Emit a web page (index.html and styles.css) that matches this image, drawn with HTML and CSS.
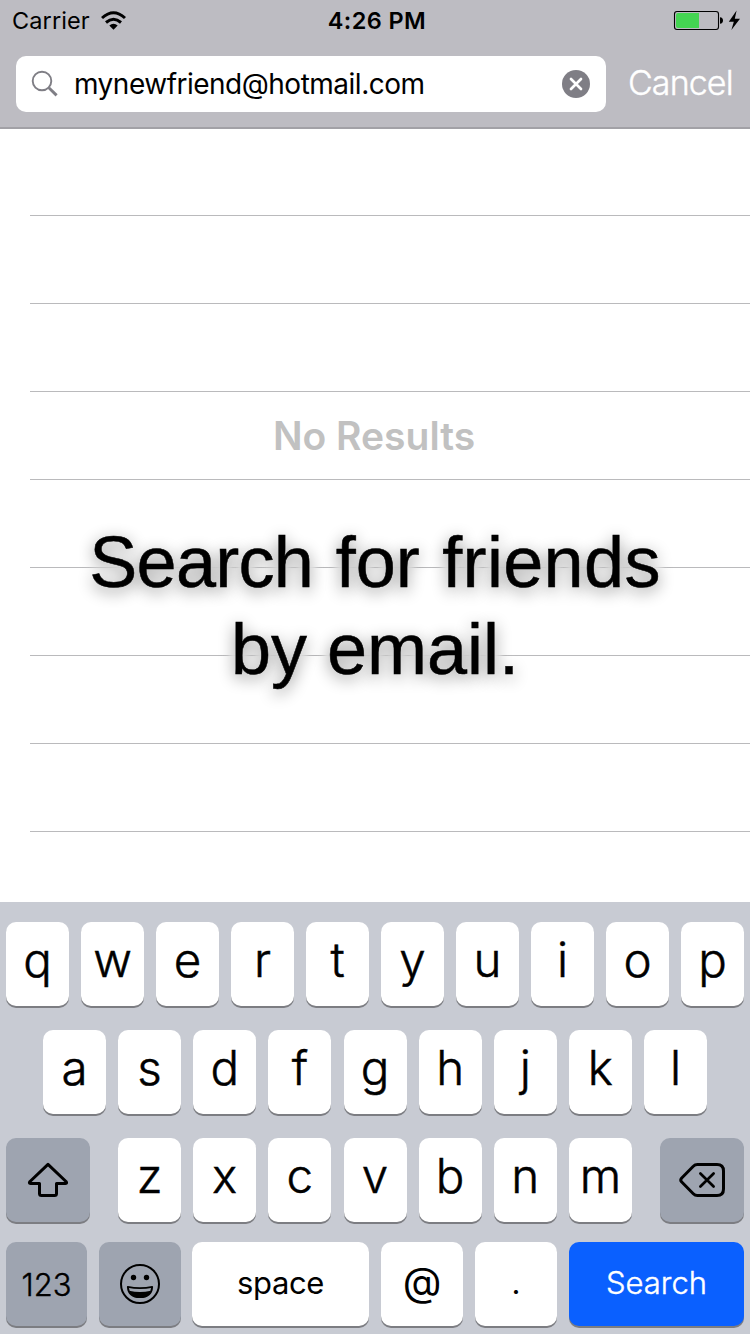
FILE: index.html
```html
<!DOCTYPE html>
<html lang="en">
<head>
<meta charset="utf-8">
<title>Search friends</title>
<link rel="stylesheet" href="styles.css">
</head>
<body>
<div class="phone">
  <header class="header">
    <div class="status">
      <div class="status-left">
        <span class="carrier">Carrier</span>
        <svg class="wifi" width="26" height="20" viewBox="0 0 26 20">
          <path d="M1 7Q12.500 -3.400 24 7" fill="none" stroke="#000" stroke-width="3"/>
          <path d="M5 11.500Q12.500 5 20 11.500" fill="none" stroke="#000" stroke-width="3"/>
          <path d="M8.300 14.400Q12.500 11.200 16.700 14.400L12.500 18.800Z"/>
        </svg>
      </div>
      <span class="time">4:26 PM</span>
      <div class="status-right">
        <svg width="68" height="22" viewBox="0 0 68 22">
          <rect x="1.500" y="1.500" width="44" height="18" rx="2.500" fill="none" stroke="#000" stroke-width="1.100"/>
          <path d="M5 3H26V18H5Q3 18 3 16V5Q3 3 5 3Z" fill="#44d552"/>
          <path d="M47 7.200Q50 7.400 50 10.500T47 13.800Z"/>
          <path d="M63.600 0.500L55.800 11.700H60.800L58.400 20L67 8.700H61.800Z"/>
        </svg>
      </div>
    </div>
    <div class="search-row">
      <div class="field">
        <svg class="glass" width="28" height="28" viewBox="0 0 28 28" fill="none" stroke="#7f7e85">
          <circle cx="11" cy="11" r="9.300" stroke-width="1.900"/>
          <path d="M17.800 17.800L25.600 25.400" stroke-width="2.900"/>
        </svg>
        <span class="query">mynewfriend@hotmail.com</span>
        <svg class="clear" width="28" height="28" viewBox="0 0 28 28">
          <circle cx="14" cy="14" r="14" fill="#7f7e85"/>
          <path d="M9 9L19 19M19 9L9 19" stroke="#fff" stroke-width="2.700" stroke-linecap="round"/>
        </svg>
      </div>
      <span class="cancel">Cancel</span>
    </div>
  </header>

  <main class="list">
    <div class="row first"></div>
    <div class="row"></div>
    <div class="row"></div>
    <div class="row empty">No Results</div>
    <div class="row"></div>
    <div class="row"></div>
    <div class="row"></div>
    <div class="row"></div>
    <div class="caption"><div class="line-a"><span class="tight">Search</span> for <span class="loose">friends</span></div><div class="line-b">by email.</div></div>
  </main>

  <section class="keyboard">
    <div class="keys">
      <span class="key">q</span><span class="key">w</span><span class="key">e</span><span class="key">r</span><span class="key">t</span><span class="key">y</span><span class="key">u</span><span class="key">i</span><span class="key">o</span><span class="key">p</span>
    </div>
    <div class="keys middle">
      <span class="key">a</span><span class="key">s</span><span class="key">d</span><span class="key">f</span><span class="key">g</span><span class="key">h</span><span class="key">j</span><span class="key">k</span><span class="key">l</span>
    </div>
    <div class="keys third">
      <span class="key dark wide">
        <svg width="84" height="84" viewBox="0 0 84 84" fill="none" stroke="#000" stroke-width="3" stroke-linejoin="round">
          <path d="M42 26.300L60 43.500Q61.500 45.500 59.500 45.500H50.500V55.500Q50.500 57.500 48.500 57.500H35.500Q33.500 57.500 33.500 55.500V45.500H24.500Q22.500 45.500 24 43.500Z"/>
        </svg>
      </span>
      <span class="letters">
        <span class="key">z</span><span class="key">x</span><span class="key">c</span><span class="key">v</span><span class="key">b</span><span class="key">n</span><span class="key">m</span>
      </span>
      <span class="key dark wide">
        <svg width="84" height="84" viewBox="0 0 84 84" fill="none" stroke="#000" stroke-width="3" stroke-linejoin="round" stroke-linecap="round">
          <path d="M37.500 26.500H57Q63.500 26.500 63.500 33V51Q63.500 57.500 57 57.500H37.500Q35 57.500 33.300 55.700L21.500 43.800Q20 42 21.500 40.200L33.300 28.300Q35 26.500 37.500 26.500Z"/>
          <path stroke-width="2.700" d="M40.400 35.500L53.600 48.500M53.600 35.500L40.400 48.500"/>
        </svg>
      </span>
    </div>
    <div class="keys bottom">
      <span class="key dark numbers">123</span>
      <span class="key dark emoji">
        <svg width="82" height="84" viewBox="0 0 82 84">
          <circle cx="41" cy="42" r="19" fill="none" stroke="#000" stroke-width="2"/>
          <circle cx="34.500" cy="35.500" r="2.700"/><circle cx="47.500" cy="35.500" r="2.700"/>
          <path d="M28.800 44.900Q41 47.300 53.200 44.900Q52.500 55.200 41 55.200T28.800 44.900Z" fill="none" stroke="#000" stroke-width="1.800" stroke-linejoin="round"/>
          <path d="M30.200 48.700Q41 51.300 51.800 48.700Q49.500 56 41 56T30.200 48.700Z"/>
        </svg>
      </span>
      <span class="key space">space</span>
      <span class="key at">@</span>
      <span class="key dot">.</span>
      <span class="key go">Search</span>
    </div>
  </section>
</div>
</body>
</html>
```
FILE: styles.css
```css
* { box-sizing: border-box; }
body { margin: 0; font-family: Inter, "Liberation Sans", sans-serif; color: #000; }
svg { display: block; flex: none; }
.phone { width: 750px; height: 1334px; display: flex; flex-direction: column; overflow: hidden; background: #fff; }

.header { height: 129px; flex: none; background: #bdbcc2; border-bottom: 2px solid #a2a1a6; }
.status { height: 40px; display: grid; grid-template-columns: 1fr auto 1fr; align-items: center; padding: 1px 8px 0 12px; white-space: nowrap; }
.status-left { display: flex; align-items: center; gap: 11px; }
.carrier { font-size: 23.500px; line-height: 40px; letter-spacing: 0.1px; }
.time { font-size: 23.500px; font-weight: 600; line-height: 40px; letter-spacing: 0.4px; }
.status-right { display: flex; justify-content: flex-end; padding-right: 1px; }
.search-row { display: flex; padding: 16px 0 0 16px; white-space: nowrap; }
.field { width: 590px; height: 56px; display: flex; align-items: center; background: #fff; border-radius: 10px; padding: 0 16px 0 15px; }
.query { flex: 1; padding-left: 15px; font-size: 28px; line-height: 54px; letter-spacing: -0.5px; }
.cancel { padding-left: 22px; font-size: 34px; font-weight: 300; line-height: 53px; letter-spacing: -0.9px; color: #fff; -webkit-text-stroke: 0.4px #fff; }

.list { position: relative; flex: 1; }
.row { height: 88px; margin-left: 30px; border-bottom: 1px solid #bababc; }
.row.first { height: 87px; }
.empty { padding-right: 32px; text-align: center; font-size: 39px; font-weight: 600; line-height: 88px; color: #c1c1c1; }
.caption {
  position: absolute; top: 390px; left: 0; width: 750px; text-align: center; white-space: nowrap;
  font: 72px/87px "Liberation Sans", Arial, sans-serif;
  -webkit-text-stroke: 0.5px #000;
  text-shadow: 0 4px 16px rgba(0, 0, 0, 0.48), 0 0 8px #fff, 0 0 8px #fff, 0 0 10px #fff, 0 0 12px #fff, 0 0 12px #fff, 0 0 14px #fff, 0 0 14px #fff;
}
.tight { letter-spacing: -0.7px; }
.loose { letter-spacing: 0.350px; }
.line-a { word-spacing: 2.500px; }

.keyboard { height: 432px; flex: none; display: flex; flex-direction: column; padding: 20px 6px 0; background: #c8cbd3; }
.keys { height: 84px; margin-bottom: 24px; display: flex; justify-content: space-between; }
.middle { padding: 0 37px; }
.third { margin-bottom: 20px; }
.letters { width: 514px; margin-left: 0.100px; display: flex; justify-content: space-between; }
.key { width: 63px; height: 84px; flex: none; text-align: center; background: #fff; border-radius: 10px; box-shadow: 0 2px 0 #7c7d82; font-size: 47.500px; font-weight: 300; line-height: 76px; -webkit-text-stroke: 0.5px #000; }
.wide { width: 84px; }
.dark { background: #9ea4b0; }
.bottom { justify-content: flex-start; gap: 12px; }
.bottom .key { font-size: 31px; line-height: 82px; font-weight: 400; -webkit-text-stroke: 0; }
.bottom .numbers { width: 81px; line-height: 85px; font-weight: 300; -webkit-text-stroke: 0.4px #000; }
.bottom .emoji { width: 82px; margin-right: -1px; }
.bottom .space { width: 177px; letter-spacing: -0.400px; }
.bottom .at { width: 82px; font-size: 40px; line-height: 79px; }
.bottom .dot { width: 82px; }
.bottom .go { width: 175px; color: #fff; background: #0a60ff; font-weight: 300; -webkit-text-stroke: 0.4px #fff; }
```
